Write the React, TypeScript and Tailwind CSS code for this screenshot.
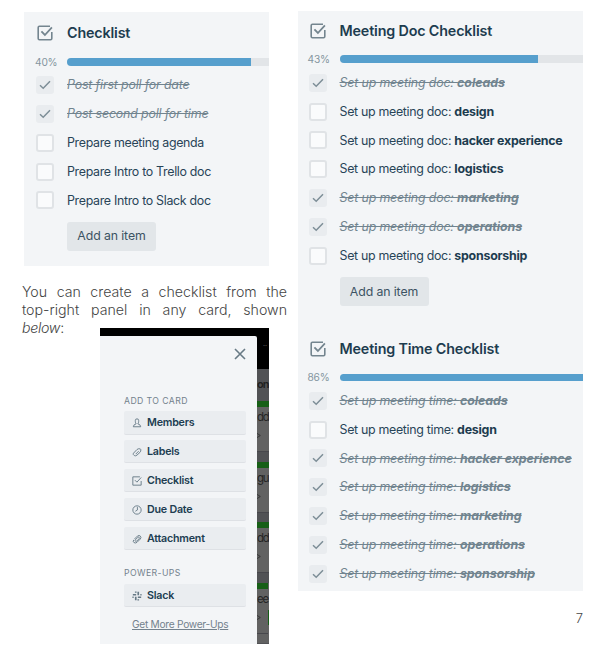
import type { ReactNode } from 'react';

type Item = { text: string; bold?: string; done?: boolean };

const prep: Item[] = [
  { text: 'Post first poll for date', done: true },
  { text: 'Post second poll for time', done: true },
  { text: 'Prepare meeting agenda' },
  { text: 'Prepare Intro to Trello doc' },
  { text: 'Prepare Intro to Slack doc' },
];

const teams = ['coleads', 'design', 'hacker experience', 'logistics', 'marketing', 'operations', 'sponsorship'];
const docOpen = ['design', 'hacker experience', 'logistics', 'sponsorship'];
const docs: Item[] = teams.map((t) => ({ text: 'Set up meeting doc: ', bold: t, done: !docOpen.includes(t) }));
const times: Item[] = teams.map((t) => ({ text: 'Set up meeting time: ', bold: t, done: t !== 'design' }));

function CheckIcon({ className }: { className: string }) {
  return (
    <svg viewBox="0 0 16 16" fill="none" stroke="currentColor" className={className}>
      <path d="M13 1.2H2.4Q1.2 1.2 1.2 2.4v11.2q0 1.2 1.2 1.2h11.2q1.2 0 1.2-1.2V7" strokeWidth="1.6" />
      <path d="M4.4 6.4 7.9 10l7-7.6" strokeWidth="1.8" />
    </svg>
  );
}

function Checklist({ title, percent, fill, items, button }: { title: string; percent: string; fill: string; items: Item[]; button?: boolean }) {
  return (
    <section>
      <div className="flex h-[28.8px] items-center pl-[13px]">
        <CheckIcon className="h-4 w-4 text-[#74858f]" />
        <h2 className="pl-[14px] text-[14.3px] font-semibold tracking-[-0.15px] text-[#1d3c4f]">{title}</h2>
      </div>
      <div className="mt-[10.5px] mb-[5.3px] flex h-[7.6px] items-center">
        <span className="w-[43px] shrink-0 pl-[11px] text-[10.2px] leading-none tracking-[-0.2px] text-[#8595a0]">{percent}</span>
        <div className="h-full flex-1 overflow-hidden rounded-l-full bg-[#e2e5e8]">
          <div className={`h-full bg-[#569fcd] ${fill}`} />
        </div>
      </div>
      {items.map((item) => (
        <div key={item.text + item.bold} className="flex h-[28.8px] items-center pl-3">
          {item.done ? (
            <span className="flex h-[18px] w-[18px] items-center justify-center rounded-[3px] bg-[#e9ecef]">
              <svg viewBox="0 0 12 12" fill="none" stroke="#7d8e97" strokeWidth="1.5" className="h-3 w-3">
                <path d="m1 6.2 3.2 3L11 2.3" />
              </svg>
            </span>
          ) : (
            <span className="h-[18px] w-[18px] rounded-[3px] border-2 border-[#e0e3e6] bg-[#fafbfc]" />
          )}
          <span className={`pt-px pl-[13px] text-[12.4px] whitespace-pre ${item.done ? 'tracking-[-0.16px] text-[#71848f] italic line-through' : 'tracking-[-0.31px] text-[#284457]'}`}>
            {item.text}
            {item.bold && <b className={item.done ? 'font-bold tracking-[-0.04px]' : 'font-bold tracking-[-0.24px] text-[#1d3c4f]'}>{item.bold}</b>}
          </span>
        </div>
      ))}
      {button && (
        <button className="mt-[7.3px] ml-[43px] block h-[29px] w-[89px] rounded-[3px] bg-[#e2e6e9] text-[12.3px] tracking-[-0.1px] text-[#3c5363]">Add an item</button>
      )}
    </section>
  );
}

function PanelButton({ label, icon }: { label: string; icon: ReactNode }) {
  return (
    <div className="mb-[5.4px] flex h-[23.5px] items-center rounded-[2px] border-b border-[#dee1e5] bg-[#eaedf0] pt-[2px] pl-2">
      <svg viewBox="0 0 12 12" fill="none" stroke="#667985" strokeWidth="1.1" className="h-[10px] w-[10px]">{icon}</svg>
      <span className="pl-[5px] text-[10.7px] font-semibold tracking-[-0.22px] text-[#203d51]">{label}</span>
    </div>
  );
}

function BoardCard({ label }: { label: string }) {
  return (
    <div className="mb-[9.5px] h-[51px] border-b border-[#47474c] bg-[#626262] text-[#252525]">
      <div className="h-[6px] bg-[#175f17]" />
      <div className="mt-[2px] text-[11.5px] leading-4 tracking-[-1.2px] whitespace-nowrap">{label}</div>
      <svg viewBox="0 0 6 8" fill="none" stroke="#303030" strokeWidth="1" className="mt-[7px] h-[7px] w-[5px]">
        <path d="M0 1.5 4 4 0 6.5" />
      </svg>
    </div>
  );
}

export default function App() {
  return (
    <main className="flex h-[659px] w-[595px] overflow-hidden bg-white font-['Inter',sans-serif]">
      <div className="w-[298px] shrink-0 pt-3">
        <div className="ml-6 h-[254px] w-[245px] bg-[#f3f5f7] pt-[6.7px]">
          <Checklist title="Checklist" percent="40%" fill="w-[184px]" items={prep} button />
        </div>
        <p className="mt-[17px] ml-[22px] h-[54px] w-[265px] text-[14.2px] leading-[18px] font-light text-[#444]">
          <span className="block [text-align-last:justify]">You can create a checklist from the</span>
          <span className="block [text-align-last:justify]">top-right panel in any card, shown</span>
          <span className="block tracking-[-0.3px]"><em>below</em>:</span>
        </p>
        <div className="-mt-[9px] ml-[100px] flex h-[316px] w-[169px] bg-black">
          <aside className="mt-2 w-[157px] shrink-0 rounded-tr-[2px] bg-[#f3f5f7] pr-[11.5px] pl-6">
            <div className="flex h-[58px] justify-end pt-3">
              <svg viewBox="0 0 12 12" stroke="#687a85" strokeWidth="1.6" className="h-3 w-3">
                <path d="m1 1 10 10M11 1 1 11" />
              </svg>
            </div>
            <h3 className="h-[17px] text-[8.7px] leading-[14px] tracking-[0.4px] text-[#74828d]">ADD TO CARD</h3>
            <PanelButton label="Members" icon={<path d="M4 4V3a2 2 0 0 1 4 0v1q0 2-1 3 3 .5 3.5 3.5h-9Q2 7.500 5 7 4 6 4 4Z" />} />
            <PanelButton label="Labels" icon={<path d="M1.700 7.500 6 3q1.400-1.300 3.600-.8.9.2 1 1 .2 2-1 3.200L6 9.700q-1.700 1.500-3.200.6-2-1.200-1.100-2.800ZM4.500 8.500 8 5" />} />
            <PanelButton label="Checklist" icon={<path d="M9.500 1H1v10h10V6M3.500 5l2.400 2.400L11 1.800" />} />
            <PanelButton label="Due Date" icon={<><circle cx="6" cy="6" r="5" /><path d="M6.500 2.500V6L4 7.500" /></>} />
            <PanelButton label="Attachment" icon={<path d="m3 6 3.500-3.500q2-1.500 3.500 0t0 3.500L6 10q-2 1.500-3.700.2T2.200 7M4 7l3-3q1-.7 1.600 0t0 1.600L5.700 8.500q-1 .8-1.700.1T4 7" />} />
            <h3 className="mt-[16.300px] h-[17.500px] text-[8.7px] leading-[14px] tracking-[0.4px] text-[#74828d]">POWER-UPS</h3>
            <PanelButton label="Slack" icon={<path d="M4.500 .5V2M1 4.500h4M7.500 1v4M10 4.500h1.500M7 7.500h4M7.500 10v1.500M4.500 7v4M.5 7.500H2" strokeWidth="2" />} />
            <a className="mt-[9.500px] ml-2 block text-[10.2px] leading-[15px] tracking-[-0.28px] whitespace-nowrap text-[#74828d] underline">Get More Power-Ups</a>
          </aside>
          <div className="w-3 overflow-hidden">
            <div className="h-[41px] pt-[14px] pl-[6px] text-[7px] leading-[8px] text-[#666]">··</div>
            <div className="h-[275px] bg-[#515255]">
              <div className="h-8 pt-[7px] text-[11px] leading-4 font-semibold tracking-[-1px] whitespace-nowrap text-[#202020]">on</div>
              <BoardCard label="dd" />
              <BoardCard label="gu" />
              <BoardCard label="dd" />
              <div className="flex items-end bg-[#626262]">
                <div className="w-[11px]"><BoardCard label="ee" /></div>
                <div className="mb-[18px] h-[15px] w-px bg-[#175f17]" />
              </div>
            </div>
          </div>
        </div>
      </div>
      <div className="w-[285px] shrink-0 pt-[11px]">
        <div className="h-[580px] overflow-hidden bg-[#f3f5f7] pt-[5.2px]">
          <div className="-ml-[1.5px]">
            <Checklist title="Meeting Doc Checklist" percent="43%" fill="w-[198px]" items={docs} button />
            <div className="h-[28px]" />
            <Checklist title="Meeting Time Checklist" percent="86%" fill="w-full" items={times} />
          </div>
        </div>
        <div className="pt-[17px] text-right text-[13px] leading-5 font-light text-[#444]">7</div>
      </div>
    </main>
  );
}
